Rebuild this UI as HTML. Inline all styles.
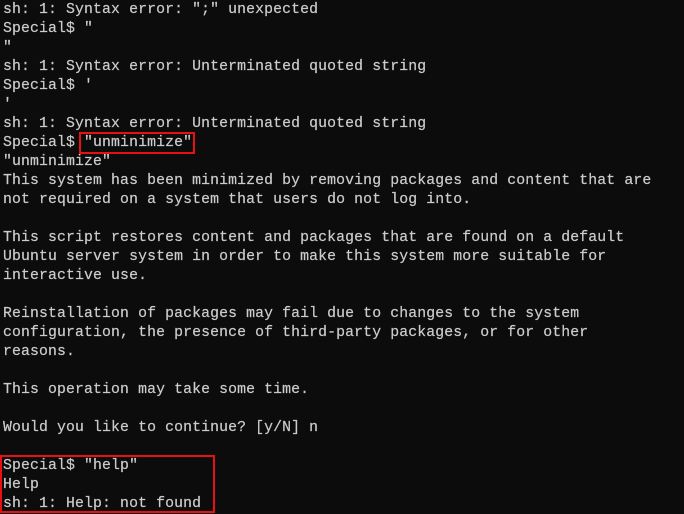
<!DOCTYPE html>
<html><head><style>
html,body{margin:0;padding:0;background:#0c0c0c;width:684px;height:514px;overflow:hidden}
pre{margin:0;position:absolute;left:3px;top:1px;font-family:"Liberation Mono","DejaVu Sans Mono",monospace;font-size:14.8px;letter-spacing:0.125px;line-height:19px;color:#cccccc;white-space:pre;-webkit-text-stroke:0.2px #cccccc}
.b{position:absolute;border:2px solid #e81010;box-sizing:border-box}
</style></head><body>
<pre>sh: 1: Syntax error: ";" unexpected
Special$ "
"
sh: 1: Syntax error: Unterminated quoted string
Special$ '
'
sh: 1: Syntax error: Unterminated quoted string
Special$ "unminimize"
"unminimize"
This system has been minimized by removing packages and content that are
not required on a system that users do not log into.

This script restores content and packages that are found on a default
Ubuntu server system in order to make this system more suitable for
interactive use.

Reinstallation of packages may fail due to changes to the system
configuration, the presence of third-party packages, or for other
reasons.

This operation may take some time.

Would you like to continue? [y/N] n

Special$ "help"
Help
sh: 1: Help: not found</pre>
<div class="b" style="left:79px;top:132px;width:116px;height:22px"></div>
<div class="b" style="left:0;top:455px;width:215px;height:58px"></div>
</body></html>
